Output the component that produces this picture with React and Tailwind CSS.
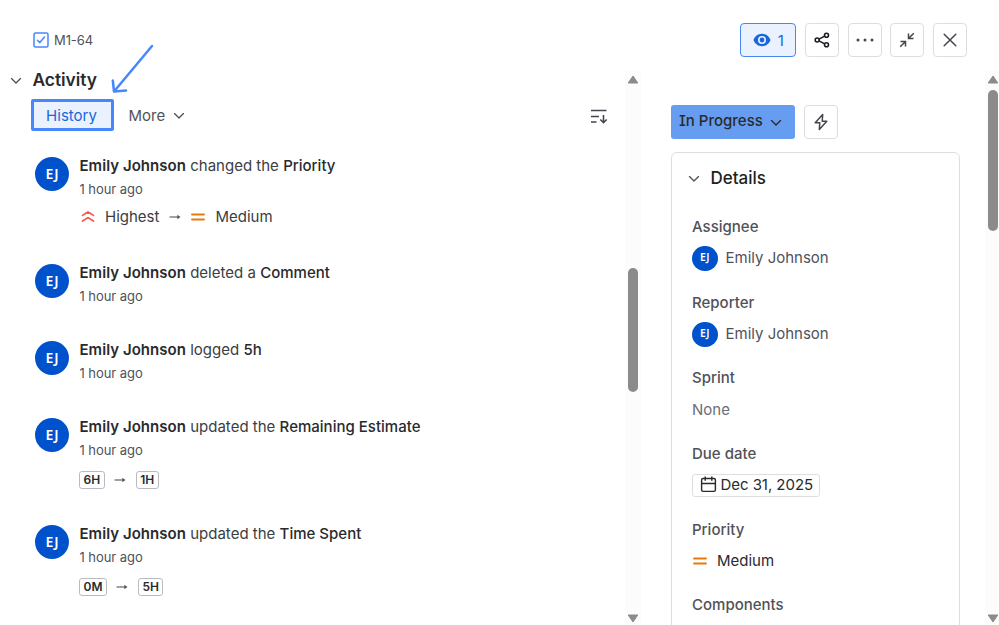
import React from "react";

function Chevron({ className = "" }) {
  return (
    <svg viewBox="0 0 12 8" className={`h-2 w-3 shrink-0 ${className}`} fill="none" stroke="currentColor" strokeWidth="1.35" strokeLinecap="round" strokeLinejoin="round">
      <path d="M1.500 1.600 6 6.100l4.500-4.500" />
    </svg>
  );
}

function IconButton({ children }) {
  return (
    <button className="flex h-[34px] w-[34px] shrink-0 items-center justify-center rounded-[4px] border border-[#dddee1] bg-white text-[#44464c]">
      {children}
    </button>
  );
}

function Avatar({ small = false }) {
  return (
    <div
      className={`flex shrink-0 items-center justify-center rounded-full bg-[#0052cc] font-['Noto_Sans',sans-serif] font-semibold text-white ${
        small ? "h-[25.500px] w-[25.500px] pb-px text-[10.500px]" : "h-[34px] w-[34px] pb-[2px] text-[14px]"
      }`}
    >
      EJ
    </div>
  );
}

function MediumIcon() {
  return (
    <svg viewBox="0 0 16 16" className="h-4 w-4 shrink-0" stroke="#e8790c" strokeWidth="1.800" strokeLinecap="round">
      <path d="M2 5.500h12M2 10.500h12" />
    </svg>
  );
}

function HighestIcon() {
  return (
    <svg viewBox="0 0 16 16" className="h-4 w-4 shrink-0" fill="none" stroke="#f8564a" strokeWidth="1.700" strokeLinecap="round" strokeLinejoin="round">
      <path d="M2.500 6.400 8 3l5.500 3.400M2.500 12 8 8.600l5.500 3.400" />
    </svg>
  );
}

function Arrow() {
  return (
    <svg viewBox="0 0 12 8" className="h-2 w-3 shrink-0" fill="none" stroke="#55575d" strokeWidth="1.100">
      <path d="M.500 4H10" />
      <path d="M8.300 1.800 11.500 4 8.300 6.200z" fill="#55575d" stroke="none" />
    </svg>
  );
}

function Tag({ children }) {
  return (
    <span className="flex h-[18px] items-center rounded-[3px] border border-[#b9bbc1] px-[3.500px] text-[12px] font-semibold text-[#292a2e]">
      {children}
    </span>
  );
}

function Entry({ action, subject, children }) {
  return (
    <div className={`flex shrink-0 ${children ? "h-[107px]" : "h-[77px]"}`}>
      <div className="pt-[2px]">
        <Avatar />
      </div>
      <div className="ml-[10.500px] flex flex-col">
        <p className="h-[23px] whitespace-nowrap text-[15px] leading-[22px] tracking-[0.010px] text-[#3b3d42]">
          <span className="font-semibold tracking-[0.040px] text-[#292a2e]">Emily Johnson</span> {action}{" "}
          <span className="font-medium text-[#292a2e]">{subject}</span>
        </p>
        <p className="text-[13px] leading-[22px] tracking-[-0.050px] text-[#505258]">1 hour ago</p>
        {children}
      </div>
    </div>
  );
}

function TagChange({ from, to }) {
  return (
    <div className="mt-[9.500px] ml-[-0.500px] flex items-center">
      <Tag>{from}</Tag>
      <span className="mx-[9.500px] flex">
        <Arrow />
      </span>
      <Tag>{to}</Tag>
    </div>
  );
}

function Field({ label, children }) {
  return (
    <div className="h-[75.600px] shrink-0">
      <div className="text-[15px] leading-[20px] font-medium text-[#505258]">{label}</div>
      <div className="mt-[6.500px] flex h-[30px] items-center text-[15px] text-[#505258]">{children}</div>
    </div>
  );
}

function Scrollbar({ thumb }) {
  return (
    <div className="flex h-full w-4 shrink-0 flex-col items-center bg-[#fcfcfc] text-[#8b8b8b]">
      <svg viewBox="0 0 12 9" className="mt-[4px] h-[9px] w-3 shrink-0" fill="currentColor" stroke="currentColor" strokeLinejoin="round">
        <path d="M6 1 1.200 8h9.600z" />
      </svg>
      <div className={`w-[10px] rounded-full bg-[#8b8b8b] ${thumb}`} />
      <svg viewBox="0 0 12 9" className="mt-auto mb-[2px] h-[9px] w-3 shrink-0" fill="currentColor" stroke="currentColor" strokeLinejoin="round">
        <path d="M6 8 1.200 1h9.600z" />
      </svg>
    </div>
  );
}

export default function App() {
  return (
    <div className="relative flex h-[625px] w-[999px] flex-col overflow-hidden bg-white font-['Inter',sans-serif]">
      <header className="flex h-[71px] shrink-0 items-start justify-between pt-[23px] pr-[32px] pl-[33px]">
        <div className="flex h-[34px] items-center gap-[5px] text-[13px] tracking-[-0.100px] text-[#505258]">
          <svg viewBox="0 0 16 16" className="h-4 w-4" fill="none" stroke="#4688fc" strokeWidth="1.500" strokeLinecap="round" strokeLinejoin="round">
            <rect x="1" y="1" width="14" height="14" rx="1.500" />
            <path d="m4.500 8.300 2.300 2.300 4.700-5.600" />
          </svg>
          <span className="pt-px">M1-64</span>
        </div>
        <div className="flex gap-[8.700px]">
          <button className="flex h-[34px] w-[56px] items-center justify-center gap-[7px] rounded-[4px] border border-[#4688ec] bg-[#e9f2fe] text-[15px] text-[#1868db]">
            <svg viewBox="0 0 18 14" className="h-[14px] w-[18px]" fill="currentColor">
              <path fillRule="evenodd" d="M9 .8C4.800.8 1.700 3.600.500 7c1.200 3.400 4.300 6.200 8.500 6.200s7.300-2.800 8.500-6.200C16.300 3.600 13.200.8 9 .8Zm0 2.200a4 4 0 1 1 0 8 4 4 0 0 1 0-8Z" />
              <circle cx="9" cy="7" r="2.400" />
            </svg>
            <span className="pt-[2px]">1</span>
          </button>
          <IconButton>
            <svg viewBox="0 0 16 16" className="h-4 w-4 text-[#1c1d20]" fill="none" stroke="currentColor" strokeWidth="1.600">
              <circle cx="3.200" cy="8" r="2" />
              <circle cx="12.500" cy="3.200" r="2" />
              <circle cx="12.500" cy="12.800" r="2" />
              <path d="m5 7.100 5.700-3M5 8.900l5.700 3" />
            </svg>
          </IconButton>
          <IconButton>
            <svg viewBox="0 0 18 4" className="h-1 w-[18px]" fill="currentColor">
              <circle cx="2" cy="2" r="1.500" />
              <circle cx="9" cy="2" r="1.500" />
              <circle cx="16" cy="2" r="1.500" />
            </svg>
          </IconButton>
          <IconButton>
            <svg viewBox="0 0 16 16" className="h-4 w-4" fill="none" stroke="currentColor" strokeWidth="1.500">
              <path d="M14.800 1.200 9.700 6.300M9.500 1.500v5h5M1.200 14.800l5.100-5.100M1.500 9.500h5v5" />
            </svg>
          </IconButton>
          <IconButton>
            <svg viewBox="0 0 14 14" className="h-[14px] w-[14px]" stroke="currentColor" strokeWidth="1.500" strokeLinecap="round">
              <path d="m1.200 1.200 11.600 11.600M12.800 1.200 1.200 12.800" />
            </svg>
          </IconButton>
        </div>
      </header>

      <div className="flex min-h-0 flex-1">
        <main className="flex w-[625px] shrink-0 flex-col">
          <div className="flex h-[28px] shrink-0 items-start pl-[10px]">
            <Chevron className="mt-[6px] text-[#505258]" />
            <h2 className="mt-[-3px] ml-[10.500px] text-[17.400px] leading-[24px] font-semibold tracking-[-0.050px] text-[#292a2e]">Activity</h2>
          </div>
          <div className="flex h-8 shrink-0 items-center pr-[17px] pl-[31px] text-[15px]">
            <button className="flex h-8 w-[83px] items-center justify-center rounded-[2px] border-[3px] border-[#4688fc] bg-[#e9f2fe] pt-[2px] pr-[2px] text-[#1868db]">
              History
            </button>
            <button className="ml-[14.500px] flex items-center gap-[7.500px] pt-[2px] text-[#505258]">
              More
              <Chevron />
            </button>
            <svg viewBox="0 0 18 18" className="mt-[3px] ml-auto h-[18px] w-[18px] text-[#44464c]" fill="none" stroke="currentColor" strokeWidth="1.600">
              <path d="M1 2.500h15.500M1 8.500h8M1 14h5.500M13.500 7v7.500M10.300 11.500l3.200 3.200 3.200-3.200" />
            </svg>
          </div>
          <div className="flex flex-col pt-[24px] pl-[35px]">
            <Entry action="changed the" subject="Priority">
              <div className="mt-[6px] flex items-center text-[15px] leading-[22px] text-[#3b3d42]">
                <HighestIcon />
                <span className="ml-[9.500px]">Highest</span>
                <span className="mx-[9.500px] flex">
                  <Arrow />
                </span>
                <MediumIcon />
                <span className="ml-[9px]">Medium</span>
              </div>
            </Entry>
            <Entry action="deleted a" subject="Comment" />
            <Entry action="logged" subject="5h" />
            <Entry action="updated the" subject="Remaining Estimate">
              <TagChange from="6H" to="1H" />
            </Entry>
            <Entry action="updated the" subject="Time Spent">
              <TagChange from="0M" to="5H" />
            </Entry>
          </div>
        </main>
        <Scrollbar thumb="mt-[184px] h-[124px]" />

        <aside className="ml-[30px] flex w-[289px] shrink-0 flex-col overflow-hidden pt-[33.500px]">
          <div className="flex shrink-0 gap-[9px]">
            <button className="flex h-[34px] w-[124px] items-center gap-[7px] rounded-[3px] bg-[#669df1] pl-[8px] text-[15px] font-medium text-[#292a2e]">
              <span className="[font-feature-settings:'cv08']">In Progress</span>
              <Chevron className="mt-[2px]" />
            </button>
            <IconButton>
              <svg viewBox="0 0 16 20" className="h-5 w-4" fill="none" stroke="currentColor" strokeWidth="1.500" strokeLinejoin="round">
                <path d="M9.700 2.500 2.200 10.800h4.600L6.300 17.500l7.500-8.300H9.200z" />
              </svg>
            </IconButton>
          </div>
          <section className="mt-[13px] flex h-[600px] shrink-0 flex-col rounded-[6px] border border-[#dddee1] px-5">
            <div className="mt-[14px] mb-[26.700px] ml-[-4.500px] flex h-6 items-center text-[17px] font-medium text-[#1e1f21]">
              <Chevron className="mr-[11px] text-[#505258]" />
              Details
            </div>
            <Field label="Assignee">
              <Avatar small />
              <span className="ml-2">Emily Johnson</span>
            </Field>
            <Field label="Reporter">
              <Avatar small />
              <span className="ml-2">Emily Johnson</span>
            </Field>
            <Field label="Sprint">
              <span className="text-[#6b6e76]">None</span>
            </Field>
            <Field label="Due date">
              <div className="flex h-[23.500px] items-center gap-[4px] rounded-[3px] border border-[#dddee1] pr-[6px] pl-[6.500px] tracking-[-0.050px] text-[#292a2e]">
                <svg viewBox="0 0 18 18" className="mb-px h-[17px] w-[17px]" fill="none" stroke="currentColor" strokeWidth="1.500">
                  <rect x="1.700" y="2.700" width="14.600" height="13.600" rx="1.500" />
                  <path d="M1.700 8h14.600M5.500.500v4.500M12.500.500v4.500" />
                </svg>
                Dec 31, 2025
              </div>
            </Field>
            <Field label="Priority">
              <MediumIcon />
              <span className="ml-[9px] text-[#292a2e]">Medium</span>
            </Field>
            <Field label="Components" />
          </section>
        </aside>
        <div className="ml-[25px] h-full w-4 shrink-0">
          <Scrollbar thumb="mt-[6px] h-[141px]" />
        </div>
      </div>

      <svg viewBox="0 0 46 52" className="absolute top-[43px] left-[109px] h-[52px] w-[46px]" fill="none" stroke="#4688fc" strokeWidth="2.500" strokeLinecap="round" strokeLinejoin="round">
        <path d="M43 3 5 48.500M3.800 37.500 5 48.500l12-1" />
      </svg>
    </div>
  );
}
